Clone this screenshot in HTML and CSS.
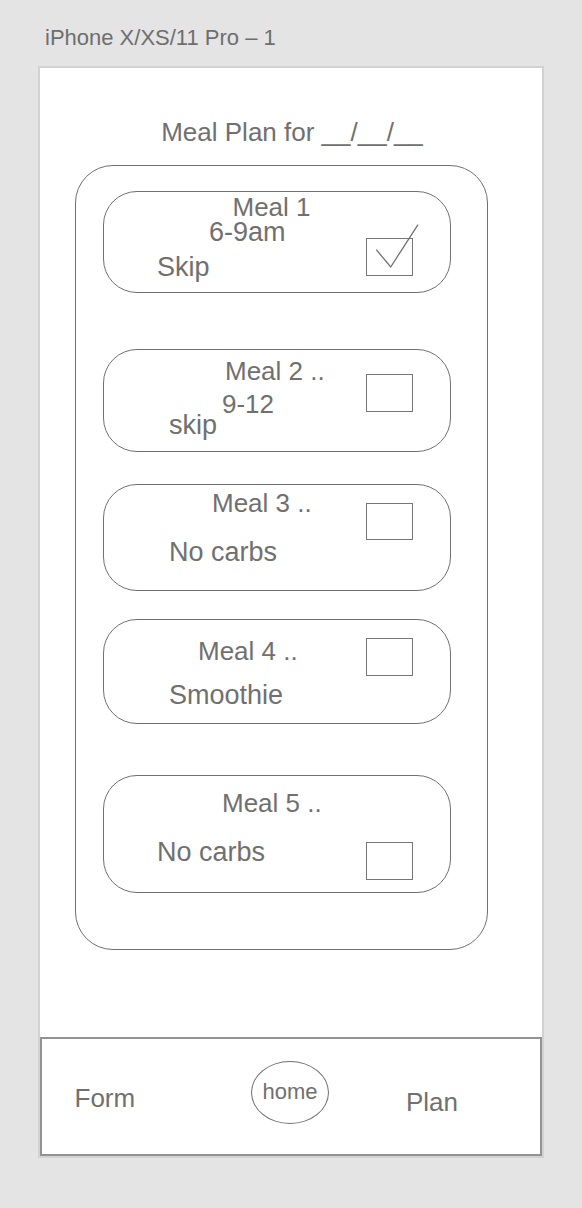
FILE: index.html
```html
<!DOCTYPE html>
<html lang="en">
<head>
<meta charset="utf-8">
<title>iPhone X/XS/11 Pro – 1</title>
<link rel="stylesheet" href="styles.css">
</head>
<body>
  <div class="artboard-label">iPhone X/XS/11 Pro – 1</div>
  <div class="frame">
    <h1 class="title">Meal Plan for __/__/__</h1>
    <div class="plan">
      <div class="meal meal-1">
        <div class="meal-text">
          <div class="line l1">Meal 1</div>
          <div class="line l2">6-9am</div>
          <div class="line l3">Skip</div>
        </div>
        <div class="checkbox">
          <svg class="check" width="60" height="60" viewBox="0 0 60 60">
            <polyline points="11.3,27.7 25.7,45 53,2.7" fill="none" stroke="#707070" stroke-width="1.3"/>
          </svg>
        </div>
      </div>
      <div class="meal meal-2">
        <div class="meal-text">
          <div class="line l1">Meal 2 ..</div>
          <div class="line l2">9-12</div>
          <div class="line l3">skip</div>
        </div>
        <div class="checkbox"></div>
      </div>
      <div class="meal meal-3">
        <div class="meal-text">
          <div class="line l1">Meal 3 ..</div>
          <div class="line l2">No carbs</div>
        </div>
        <div class="checkbox"></div>
      </div>
      <div class="meal meal-4">
        <div class="meal-text">
          <div class="line l1">Meal 4 ..</div>
          <div class="line l2">Smoothie</div>
        </div>
        <div class="checkbox"></div>
      </div>
      <div class="meal meal-5">
        <div class="meal-text">
          <div class="line l1">Meal 5 ..</div>
          <div class="line l2">No carbs</div>
        </div>
        <div class="checkbox"></div>
      </div>
    </div>
    <nav class="tabbar">
      <div class="tab tab-form">Form</div>
      <div class="tab tab-home">home</div>
      <div class="tab tab-plan">Plan</div>
    </nav>
  </div>
</body>
</html>
```
FILE: styles.css
```css
html, body {
  margin: 0;
  padding: 0;
}
body {
  background: #e4e4e4;
  font-family: "Liberation Sans", Arial, sans-serif;
  color: #707070;
  padding-top: 25px;
  height: 1208px;
  box-sizing: border-box;
}
.artboard-label {
  font-size: 22px;
  line-height: 26px;
  margin-left: 45px;
  color: #6e6e6e;
}
.frame {
  margin-top: 15px;
  margin-left: 38px;
  width: 506px;
  height: 1092px;
  box-sizing: border-box;
  border: 2px solid #d2d2d2;
  background: #ffffff;
  display: flex;
  flex-direction: column;
}
.title {
  margin: 48.5px 0 0 2px;
  font-size: 26px;
  line-height: 30px;
  font-weight: normal;
  text-align: center;
}
.plan {
  margin: 18.5px 0 0 35px;
  width: 413px;
  height: 785px;
  box-sizing: border-box;
  border: 1px solid #707070;
  border-radius: 38px;
  padding: 24.7px 0 0 27px;
}
.meal {
  width: 348px;
  box-sizing: border-box;
  border: 1px solid #707070;
  border-radius: 34px;
  display: flex;
  align-items: flex-start;
}
.meal-text {
  flex: 1;
  white-space: nowrap;
}
.line {
  font-size: 27px;
  line-height: 26px;
}
.line.l1 {
  font-size: 26px;
}
.checkbox {
  position: relative;
  width: 46.7px;
  height: 37.7px;
  box-sizing: border-box;
  border: 1.5px solid #767676;
  margin-right: 37.5px;
}
.check {
  position: absolute;
  left: -1.5px;
  top: -16.8px;
  overflow: visible;
}

.meal-1 { height: 102px; }
.meal-1 .l1 { margin: 2.5px 0 0 128.5px; }
.meal-1 .l2 { margin: -0.75px 0 0 105px; }
.meal-1 .l3 { margin: 9px 0 0 53px; }
.meal-1 .checkbox { margin-top: 46.3px; }

.meal-2 { height: 103px; margin-top: 56.3px; }
.meal-2 .l1 { margin: 8.5px 0 0 121px; }
.meal-2 .l2 { margin: 6.7px 0 0 118px; font-size: 26px; }
.meal-2 .l3 { margin: -5.45px 0 0 65px; }
.meal-2 .checkbox { margin-top: 24px; }

.meal-3 { height: 107px; margin-top: 32px; }
.meal-3 .l1 { margin: 5.2px 0 0 108px; }
.meal-3 .l2 { margin: 23.25px 0 0 65px; }
.meal-3 .checkbox { margin-top: 17.7px; }

.meal-4 { height: 105px; margin-top: 28.3px; }
.meal-4 .l1 { margin: 17.5px 0 0 94px; }
.meal-4 .l2 { margin: 18.25px 0 0 65px; }
.meal-4 .checkbox { margin-top: 18px; }

.meal-5 { height: 118px; margin-top: 50.7px; }
.meal-5 .l1 { margin: 14.2px 0 0 118px; }
.meal-5 .l2 { margin: 22.55px 0 0 53px; }
.meal-5 .checkbox { margin-top: 66.3px; }

.tabbar {
  margin-top: auto;
  height: 119px;
  box-sizing: border-box;
  border: 2px solid #939393;
  display: grid;
  grid-template-columns: 209px 78px 1fr;
  align-items: start;
}
.tab {
  font-size: 26px;
  line-height: 30px;
}
.tab-form {
  margin: 43.5px 0 0 32.5px;
}
.tab-home {
  margin-top: 21.7px;
  width: 78px;
  height: 63px;
  box-sizing: border-box;
  border: 1px solid #707070;
  border-radius: 50%;
  font-size: 22px;
  line-height: 22px;
  display: flex;
  align-items: center;
  justify-content: center;
}
.tab-plan {
  margin: 48.2px 0 0 77px;
}
```
